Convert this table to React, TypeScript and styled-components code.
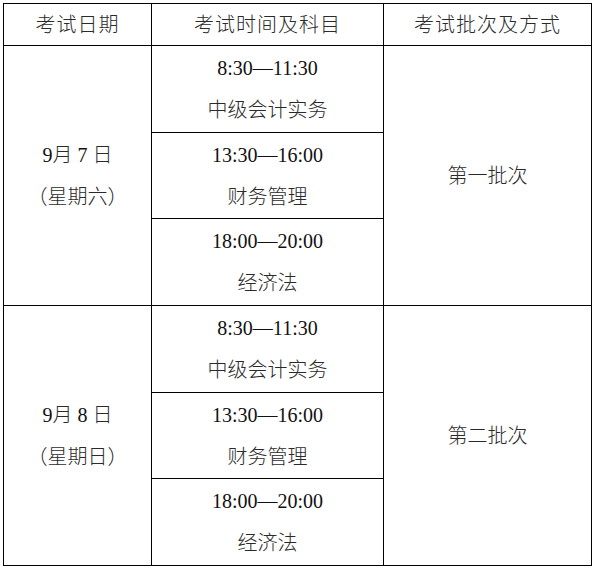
import React from 'react'
import styled, { createGlobalStyle } from 'styled-components'

const GlobalStyle = createGlobalStyle`
  html, body {
    margin: 0;
    padding: 0;
    background: #fff;
  }
`

type Session = { time: string; subject: string }

type ExamDay = {
  day: string
  weekday: string
  batch: string
  sessions: Session[]
}

const sessions: Session[] = [
  { time: '8:30—11:30', subject: '中级会计实务' },
  { time: '13:30—16:00', subject: '财务管理' },
  { time: '18:00—20:00', subject: '经济法' }
]

const days: ExamDay[] = [
  { day: '7', weekday: '（星期六）', batch: '第一批次', sessions },
  { day: '8', weekday: '（星期日）', batch: '第二批次', sessions }
]

const Page = styled.div`
  padding: 3px 0 0 3px;
`

const Table = styled.table`
  border-collapse: collapse;
  table-layout: fixed;
  width: 588px;
  font-family: 'Liberation Serif', 'Noto Sans CJK SC', serif;
  font-size: 20px;
  font-weight: 300;
  color: #2a2a2a;
`

const Cell = styled.td<{ $height?: number }>`
  border: 1px solid #000;
  padding: 0;
  text-align: center;
  vertical-align: middle;
  line-height: 42px;
  height: ${(p) => (p.$height ? `${p.$height}px` : 'auto')};
`

const HeadCell = styled.th`
  border: 1px solid #000;
  padding: 0;
  height: 41px;
  font-weight: 300;
  text-align: center;
  vertical-align: middle;
  line-height: 40px;
  letter-spacing: 1px;
`

const Line = styled.div`
  white-space: pre;
`

const Digits = styled.span`
  font-weight: 400;
  color: #111;
`

export default function App() {
  return (
    <Page>
      <GlobalStyle />
      <Table>
        <colgroup>
          <col style={{ width: 148 }} />
          <col style={{ width: 232 }} />
          <col style={{ width: 208 }} />
        </colgroup>
        <thead>
          <tr>
            <HeadCell>考试日期</HeadCell>
            <HeadCell>考试时间及科目</HeadCell>
            <HeadCell>考试批次及方式</HeadCell>
          </tr>
        </thead>
        <tbody>
          {days.map((day) =>
            day.sessions.map((s, i) => (
              <tr key={day.day + s.time}>
                {i === 0 && (
                  <Cell rowSpan={day.sessions.length}>
                    <Line>
                      <Digits>9</Digits>月 <Digits>{day.day}</Digits> 日
                    </Line>
                    <Line>{day.weekday}</Line>
                  </Cell>
                )}
                <Cell $height={85.7}>
                  <Line>
                    <Digits>{s.time}</Digits>
                  </Line>
                  <Line>{s.subject}</Line>
                </Cell>
                {i === 0 && (
                  <Cell rowSpan={day.sessions.length}>
                    <Line>{day.batch}</Line>
                  </Cell>
                )}
              </tr>
            ))
          )}
        </tbody>
      </Table>
    </Page>
  )
}
